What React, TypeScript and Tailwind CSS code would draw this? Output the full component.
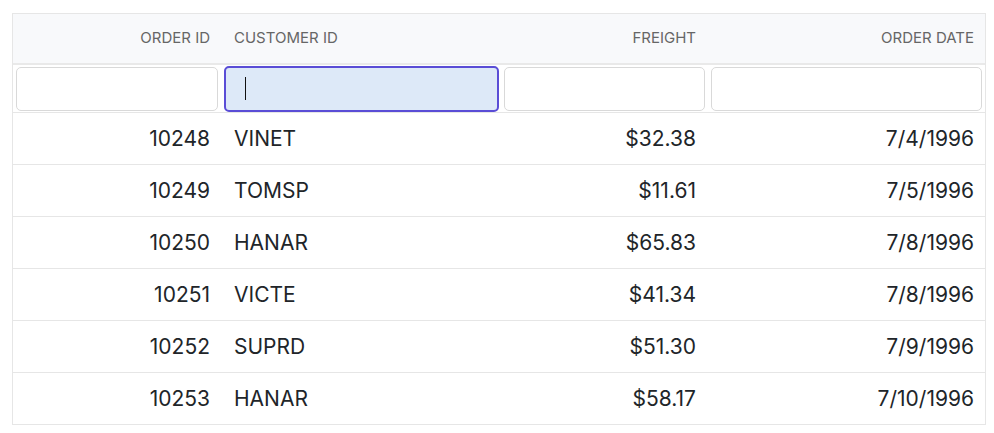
const rows = [
  { id: 10248, customer: 'VINET', freight: '$32.38', date: '7/4/1996' },
  { id: 10249, customer: 'TOMSP', freight: '$11.61', date: '7/5/1996' },
  { id: 10250, customer: 'HANAR', freight: '$65.83', date: '7/8/1996' },
  { id: 10251, customer: 'VICTE', freight: '$41.34', date: '7/8/1996' },
  { id: 10252, customer: 'SUPRD', freight: '$51.30', date: '7/9/1996' },
  { id: 10253, customer: 'HANAR', freight: '$58.17', date: '7/10/1996' },
];

const cols = 'grid grid-cols-[208px_280px_207px_277px]';

export default function App() {
  return (
    <div className="bg-white w-[994px] h-[433px] pt-[13px] pl-[12px] font-['Inter',sans-serif]">
      <div className="w-[974px] border border-[#e6e6e6] border-b-0">
        {/* header */}
        <div className={`${cols} h-[51px] bg-[#f8f9fb] border-b-2 border-[#e9e9e9] text-[15px] text-[#666] uppercase`}>
          <div className="flex items-center justify-end px-[11px]">Order ID</div>
          <div className="flex items-center px-[13px]">Customer ID</div>
          <div className="flex items-center justify-end px-[12px]">Freight</div>
          <div className="flex items-center justify-end px-[11px]">Order Date</div>
        </div>

        {/* filter row */}
        <div className={`${cols} h-[48px] border-b border-[#e6e6e6] items-center`}>
          <div className="px-[3px]">
            <div className="h-[44px] rounded-[5px] border border-[#d9d9d9] bg-white" />
          </div>
          <div className="pl-[3px] pr-[2px]">
            <div className="h-[46px] rounded-[5px] border-2 border-[#5a4dd6] bg-[#dde9f8] flex items-center pl-[19px]">
              <span className="w-[1px] h-[23px] bg-[#111]" />
            </div>
          </div>
          <div className="px-[3px]">
            <div className="h-[44px] rounded-[5px] border border-[#d9d9d9] bg-white" />
          </div>
          <div className="px-[3px]">
            <div className="h-[44px] rounded-[5px] border border-[#d9d9d9] bg-white" />
          </div>
        </div>

        {rows.map((r) => (
          <div key={r.id} className={`${cols} h-[52px] border-b border-[#e6e6e6] text-[21px] text-[#212529]`}>
            <div className="flex items-center justify-end px-[11px]">{r.id}</div>
            <div className="flex items-center px-[13px]">{r.customer}</div>
            <div className="flex items-center justify-end px-[12px]">{r.freight}</div>
            <div className="flex items-center justify-end px-[11px]">{r.date}</div>
          </div>
        ))}
      </div>
    </div>
  );
}
